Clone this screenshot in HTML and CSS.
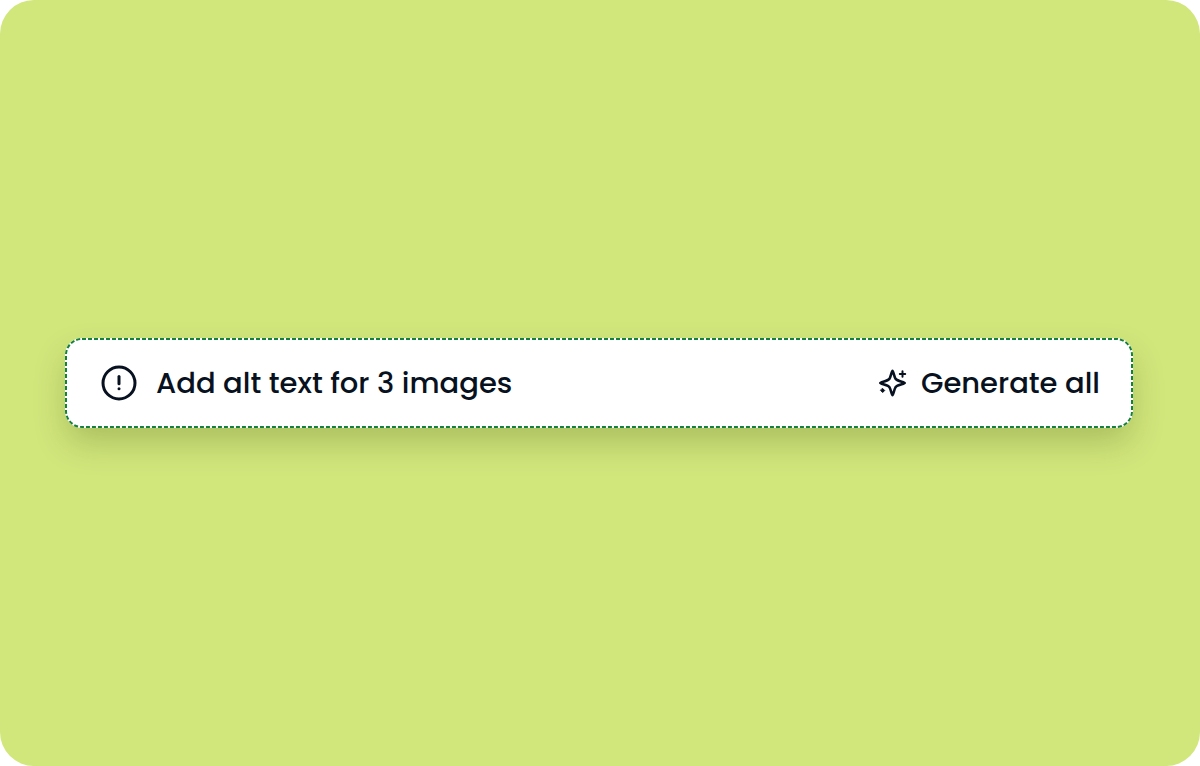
FILE: index.html
```html
<!DOCTYPE html>
<html lang="en">
<head>
    <meta charset="UTF-8">
    <meta name="viewport" content="width=device-width, initial-scale=1.0">
    <title>Add alt text</title>
    <link rel="stylesheet" href="styles.css">
</head>
<body>
    <main class="stage">
        <div class="notice">
            <svg class="notice-outline" aria-hidden="true">
                <rect x="1" y="1" rx="16" ry="16"/>
            </svg>
            <div class="message">
                <svg class="alert-icon" viewBox="0 0 36 36" aria-hidden="true">
                    <circle cx="18" cy="18" r="16"/>
                    <path d="M18 11.5v7.3"/>
                    <path d="M18 23.7v.1"/>
                </svg>
                <span>Add alt text for 3 images</span>
            </div>
            <button class="generate" type="button">
                <svg class="sparkle-icon" viewBox="0 0 28 28" aria-hidden="true">
                    <path class="star" d="M13.5 1.8C14.2 1.8 15.2 7.8 16.6 9.9C18.4 12.2 25.7 13 25.7 14C25.7 15 18.4 15.8 16.6 18.1C15.2 20.2 14.2 26.2 13.5 26.2C12.8 26.2 11.8 20.2 10.4 18.1C8.6 15.8 1.3 15 1.3 14C1.3 13 8.6 12.2 10.4 9.9C11.8 7.8 12.8 1.8 13.5 1.8Z"/>
                    <path class="plus" d="M23.5 2.3v5.4M20.8 5h5.4"/>
                    <path class="dot" d="M3.7 19.5l2 2-2 2-2-2z"/>
                </svg>
                <span>Generate all</span>
            </button>
        </div>
    </main>
</body>
</html>
```

FILE: styles.css
```css
* {
    box-sizing: border-box;
}

body {
    margin: 0;
    background-color: #fff;
    color: #081120;
    font-family: Poppins, Inter, sans-serif;
    font-size: 29px;
    font-weight: 500;
    line-height: 44px;
}

.stage {
    min-height: 100vh;
    display: flex;
    align-items: center;
    padding: 32px 67px 32px 65px;
    border-radius: 34px;
    background-color: #d1e67b;
}

.notice {
    position: relative;
    flex: 1;
    display: flex;
    flex-wrap: wrap;
    justify-content: space-between;
    align-items: center;
    gap: 16px;
    padding: 23px 33px 23px 36px;
    border-radius: 17px;
    background-color: #fff;
    box-shadow: 0 16px 32px -2px rgba(60, 80, 20, 0.26);
}

.notice-outline {
    position: absolute;
    inset: 0;
    width: 100%;
    height: 100%;
    pointer-events: none;
}

.notice-outline rect {
    width: calc(100% - 2px);
    height: calc(100% - 2px);
    fill: none;
    stroke: #15803d;
    stroke-width: 2;
    stroke-dasharray: 4 2;
}

.message {
    display: flex;
    align-items: center;
    gap: 19px;
}

.alert-icon {
    width: 36px;
    height: 36px;
    fill: none;
    stroke: currentColor;
    stroke-width: 3;
    stroke-linecap: round;
}

.generate {
    display: flex;
    align-items: center;
    gap: 14px;
    padding: 0;
    border: none;
    background: none;
    color: inherit;
    font: inherit;
    cursor: pointer;
}

.sparkle-icon {
    width: 28px;
    height: 28px;
    fill: none;
    stroke: currentColor;
    stroke-width: 2;
    stroke-linecap: round;
    stroke-linejoin: round;
}

.sparkle-icon .star {
    stroke-width: 2.6;
}

.sparkle-icon .dot {
    fill: currentColor;
    stroke-width: 1;
}
```
